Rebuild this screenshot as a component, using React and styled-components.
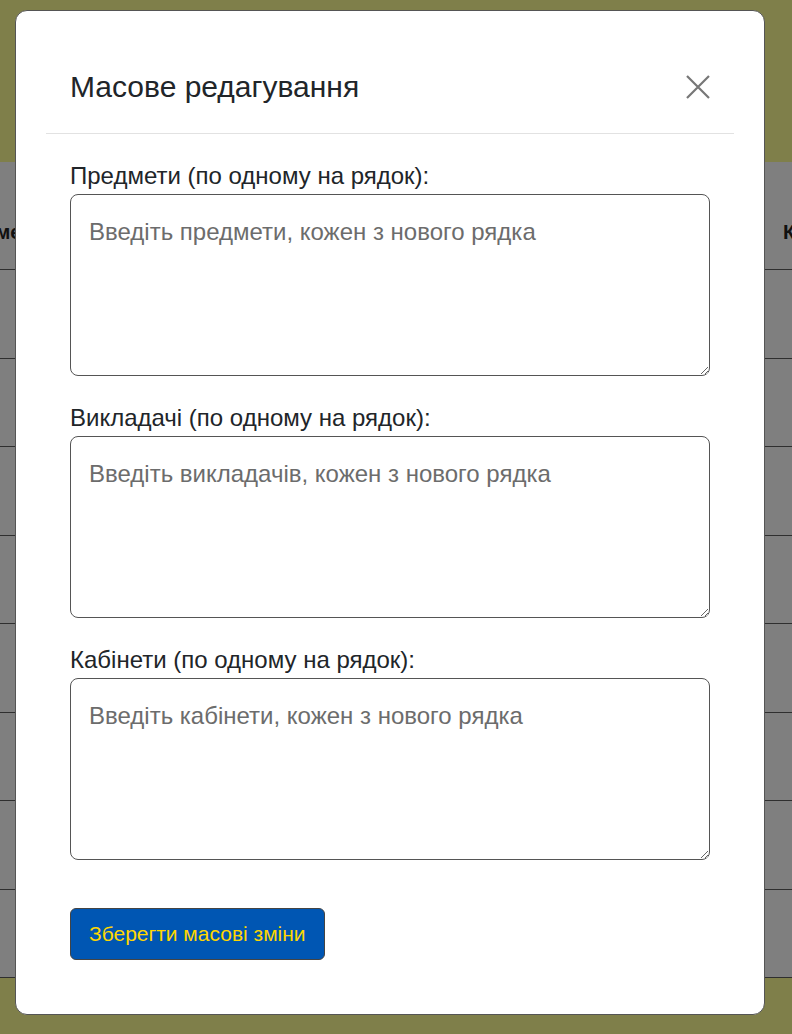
import styled, { createGlobalStyle } from "styled-components";

const GlobalStyle = createGlobalStyle`
  html, body {
    margin: 0;
    padding: 0;
    background: #fefe94;
    font-family: "Liberation Sans", Arial, sans-serif;
  }
  * { box-sizing: border-box; }
`

const Page = styled.div`
  min-height: 1034px;
  display: flex;
  flex-direction: column;
  overflow: hidden;
`
const TopBar = styled.div`
  height: 162px;
  background: #fefe94;
`
const Table = styled.div`
  background: #fff;
  display: flex;
  flex-direction: column;
  margin-left: -67px;
  width: 1000px;
`
const Row = styled.div`
  height: ${props => (props.head ? "108px" : "88.5px")};
  border-bottom: 1px solid #5e5e5e;
  display: grid;
  grid-template-columns: 838px 1fr;
  align-items: center;
  padding-top: ${props => (props.head ? "34px" : "0")};
`
const HeadCell = styled.span`
  font-weight: bold;
  font-size: 20px;
  color: #222;
  padding: 0 12px;
`
const Bottom = styled.div`
  flex: 1;
  background: #fefe94;
`

const Overlay = styled.div`
  position: fixed;
  inset: 0;
  background: rgba(0, 0, 0, 0.5);
  padding: 10px 27px 0 15px;
`
const Modal = styled.div`
  width: 750px;
  background: #fff;
  border: 1px solid #555;
  border-radius: 12px;
  padding: 0 30px 30px;
`
const Header = styled.div`
  height: 123px;
  padding: 30px 24px 0;
  display: flex;
  align-items: center;
  justify-content: space-between;
  border-bottom: 1px solid #e2e2e2;
`
const Title = styled.h2`
  margin: 0;
  font-size: 30px;
  font-weight: normal;
  color: #212529;
`
const CloseButton = styled.button`
  border: 0;
  background: none;
  padding: 0;
  width: 24px;
  height: 24px;
  display: flex;
  align-items: center;
  justify-content: center;
  cursor: pointer;
`
const Body = styled.div`
  padding: 28px 24px 24px;
  display: flex;
  flex-direction: column;
`
const Field = styled.div`
  display: flex;
  flex-direction: column;
  margin-bottom: 28px;
`
const Label = styled.label`
  font-size: 24px;
  line-height: 28px;
  color: #212529;
  margin-bottom: 4px;
`
const TextArea = styled.textarea`
  height: 182px;
  border: 1px solid #555;
  border-radius: 8px;
  padding: 23px 18px;
  font-family: "Liberation Sans", Arial, sans-serif;
  font-size: 24px;
  line-height: 28px;
  color: #212529;
  resize: vertical;
  outline: none;

  &::placeholder {
    color: #6c6c6c;
  }
`
const SaveButton = styled.button`
  align-self: flex-start;
  margin-top: 20px;
  height: 52px;
  padding: 0 18px;
  background: #0056b3;
  color: #ffd700;
  border: 1px solid #444;
  border-radius: 6px;
  font-family: "Liberation Sans", Arial, sans-serif;
  font-size: 21px;
  cursor: pointer;
`

const fields = [
  { label: "Предмети (по одному на рядок):", placeholder: "Введіть предмети, кожен з нового рядка" },
  { label: "Викладачі (по одному на рядок):", placeholder: "Введіть викладачів, кожен з нового рядка" },
  { label: "Кабінети (по одному на рядок):", placeholder: "Введіть кабінети, кожен з нового рядка" },
];

export default function App() {
  return (
    <>
      <GlobalStyle />
      <Page>
        <TopBar />
        <Table>
          <Row head>
            <HeadCell>Предмет</HeadCell>
            <HeadCell>Кабінет</HeadCell>
          </Row>
          {Array.from({ length: 8 }).map((_, i) => (
            <Row key={i} />
          ))}
        </Table>
        <Bottom />
      </Page>
      <Overlay>
        <Modal>
          <Header>
            <Title>Масове редагування</Title>
            <CloseButton aria-label="Закрити">
              <svg width="24" height="24" viewBox="0 0 24 24">
                <path d="M1 1 L23 23 M23 1 L1 23" stroke="#777" strokeWidth="2.2" />
              </svg>
            </CloseButton>
          </Header>
          <Body>
            {fields.map(f => (
              <Field key={f.label}>
                <Label>{f.label}</Label>
                <TextArea placeholder={f.placeholder} />
              </Field>
            ))}
            <SaveButton>Зберегти масові зміни</SaveButton>
          </Body>
        </Modal>
      </Overlay>
    </>
  );
}
